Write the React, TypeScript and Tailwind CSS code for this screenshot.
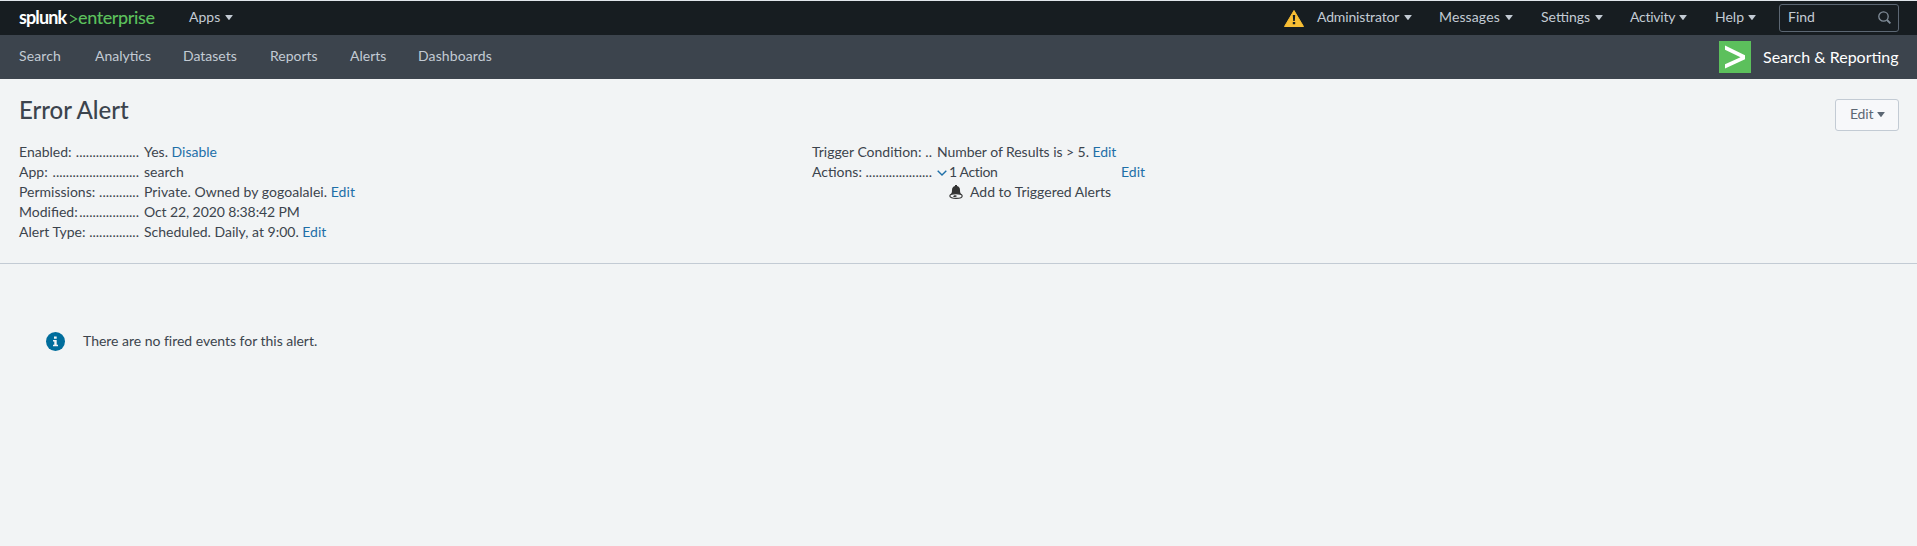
import type { ReactNode } from "react";

function Caret({ className = "" }: { className?: string }) {
  return (
    <svg className={`h-[5px] w-[8px] shrink-0 ${className}`} viewBox="0 0 8 5" fill="currentColor">
      <path d="M.8 0h6.400q.8 0 .4.600L4.400 4.700q-.4.400-.8 0L.4.600Q0 0 .8 0z" />
    </svg>
  );
}

const tabs = [
  { label: "Search", cls: "w-[76px] tracking-[0.12px]" },
  { label: "Analytics", cls: "w-[88px]" },
  { label: "Datasets", cls: "w-[87px]" },
  { label: "Reports", cls: "w-[80px]" },
  { label: "Alerts", cls: "w-[68px]" },
  { label: "Dashboards", cls: "w-[80px] tracking-[0.12px]" },
];

const menus = [
  { label: "Administrator", cls: "w-[122px]", text: "w-[87px] tracking-[-0.15px]" },
  { label: "Messages", cls: "w-[102px]", text: "w-[66px] tracking-[0.12px]" },
  { label: "Settings", cls: "w-[89px]", text: "w-[54px]" },
  { label: "Activity", cls: "w-[85px]", text: "w-[49px] tracking-[-0.25px]" },
  { label: "Help", cls: "w-[64px]", text: "w-[33px]" },
];

function Field({ label, dots, children }: { label: string; dots: string; children: ReactNode }) {
  return (
    <div className="flex h-5">
      <dt className="flex w-[125px] justify-between pr-[5px]">
        <span>{label}</span>
        <span className="tracking-[0.02px]">{dots}</span>
      </dt>
      <dd className="flex">{children}</dd>
    </div>
  );
}

function Link({ children }: { children: ReactNode }) {
  return <a href="#" className="text-[#1e6fa8]">{children}</a>;
}

export default function App() {
  return (
    <div className="h-[546px] w-[1917px] overflow-hidden whitespace-nowrap bg-[#f2f4f5] font-['Lato',sans-serif] text-[14px] leading-5 text-[#3c444d]">
      <header className="flex h-[35px] items-center border-t border-[#e1e6eb] bg-[#171d21] pl-[19px] pr-[18px] text-[#c3cbd4]">
        <div className="flex w-[170px] items-center pb-[2px] text-[18px] leading-6">
          <span className="w-[50px] font-bold tracking-[-0.9px] text-white">splunk</span>
          <svg className="mt-[3px] h-[10px] w-[9px]" viewBox="0 0 9 10" fill="none" stroke="#5cc05c" strokeWidth="1.3">
            <path d="M1 1l6.500 4L1 9" />
          </svg>
          <span className="font-medium tracking-[-0.4px] text-[#5cc05c]">enterprise</span>
        </div>
        <div className="flex items-center pb-[2px]"><span className="w-[36px]">Apps</span><Caret /></div>
        <svg className="ml-auto mr-[13px] h-[17px] w-[20px]" viewBox="0 0 20 17">
          <path d="M10 .5L19.5 16.5H.5z" fill="#f8be34" stroke="#f8be34" strokeLinejoin="round" />
          <path d="M8.8 5h2.400l-.4 6H9.200zM8.800 12h2.400v2.300H8.800z" fill="#171d21" />
        </svg>
        <nav className="flex pb-[2px]">
          {menus.map((m) => (
            <div key={m.label} className={`flex items-center ${m.cls}`}>
              <span className={m.text}>{m.label}</span><Caret />
            </div>
          ))}
        </nav>
        <div className="flex h-7 w-[120px] items-center justify-between rounded-[3px] border border-[#5c6773] pb-[2px] pl-[8px] pr-[7px]">
          <span>Find</span>
          <svg className="h-[13px] w-[13px]" viewBox="0 0 13 13" fill="none" stroke="#818d99" strokeWidth="1.3">
            <circle cx="5.5" cy="5.5" r="4.7" /><path d="M9 9l3.400 3.400" strokeWidth="1.8" />
          </svg>
        </div>
      </header>
      <div className="flex h-[44px] items-center bg-[#3c444d] pl-[19px] pr-[18px] text-[#c3cbd4]">
        <nav className="flex pb-[2px]">
          {tabs.map((t) => <a key={t.label} href="#" className={t.cls}>{t.label}</a>)}
        </nav>
        <svg className="ml-auto h-8 w-8" viewBox="0 0 32 32">
          <path d="M0 0h32v32H0z" fill="#5cc05c" />
          <path d="M6 4.500l20 9.700v4L6 27.500v-4.300l15.500-7L6 8.800z" fill="#fff" />
        </svg>
        <span className="ml-[12px] w-[136px] text-[16px] text-white">Search &amp; Reporting</span>
      </div>
      <main>
        <section className="h-[185px] border-b border-[#c3cbd4] pl-[19px] pr-[18px] pt-[19px]">
          <div className="flex h-[44px] items-start justify-between">
            <h1 className="text-[24px] font-medium leading-[24px] tracking-[-0.05px]">Error Alert</h1>
            <button className="mt-px flex h-8 w-16 items-center rounded-[3px] border border-[#c3cbd4] bg-[#f7f8fa] pb-[2px] pl-[14px] text-[#5c6773]"><span className="w-[27px] text-left tracking-[-0.2px]">Edit</span><Caret className="w-[7px]" /></button>
          </div>
          <div className="flex">
            <dl className="w-[793px]">
              <Field label="Enabled:" dots="...................">Yes.&nbsp;<Link>Disable</Link></Field>
              <Field label="App:" dots="..........................">search</Field>
              <Field label="Permissions:" dots="............"><span className="tracking-[0.05px]">Private. Owned by gogoalalei.&nbsp;<Link>Edit</Link></span></Field>
              <Field label="Modified:" dots=".................."><span className="tracking-[-0.1px]">Oct 22, 2020 8:38:42 PM</span></Field>
              <Field label="Alert Type:" dots="...............">Scheduled. Daily, at 9:00.&nbsp;<Link>Edit</Link></Field>
            </dl>
            <dl>
              <Field label="Trigger Condition:" dots=".."><span className="tracking-[-0.05px]">Number of Results is &gt; 5.&nbsp;<Link>Edit</Link></span></Field>
              <Field label="Actions:" dots="....................">
                <svg className="mt-[8px] h-[6px] w-[10px]" viewBox="0 0 10 6" fill="none" stroke="#1e6fa8" strokeWidth="1.4"><path d="M.7.7L5 5 9.300.7" /></svg>
                <span className="ml-[2px] w-[172px] tracking-[-0.35px]">1 Action</span>
                <Link>Edit</Link>
              </Field>
              <div className="flex h-5 pl-[137px]">
                <svg className="mr-[7px] mt-[3px] h-[14px] w-[14px]" viewBox="0 0 14 14">
                  <path d="M6 0h2v1c2 .5 3 2 3 4 0 2.500.5 3.500 2 5.500H1c1.500-2 2-3 2-5.500 0-2 1-3.500 3-4z" fill="#333" />
                  <ellipse cx="7" cy="11" rx="6.200" ry="2.400" fill="#f2f4f5" stroke="#333" strokeWidth="1.100" />
                  <path d="M4 11.500c1-1.500 3-1.500 4-.5-1 1-2 1.500-4 .5z" fill="#333" />
                </svg>
                <span>Add to Triggered Alerts</span>
              </div>
            </dl>
          </div>
        </section>
        <div className="flex pl-[46px] pt-[68px]">
          <svg className="h-[19px] w-[19px]" viewBox="0 0 19 19">
            <circle cx="9.500" cy="9.500" r="9.500" fill="#006d9c" />
            <path d="M8 4.500h2.700v2.200H8zM7 8h3.700v4.800H12v1.500H7v-1.500h1.300V9.500H7z" fill="#f2f4f5" />
          </svg>
          <p className="-mt-px ml-[18px] tracking-[-0.02px]">There are no fired events for this alert.</p>
        </div>
      </main>
    </div>
  );
}
